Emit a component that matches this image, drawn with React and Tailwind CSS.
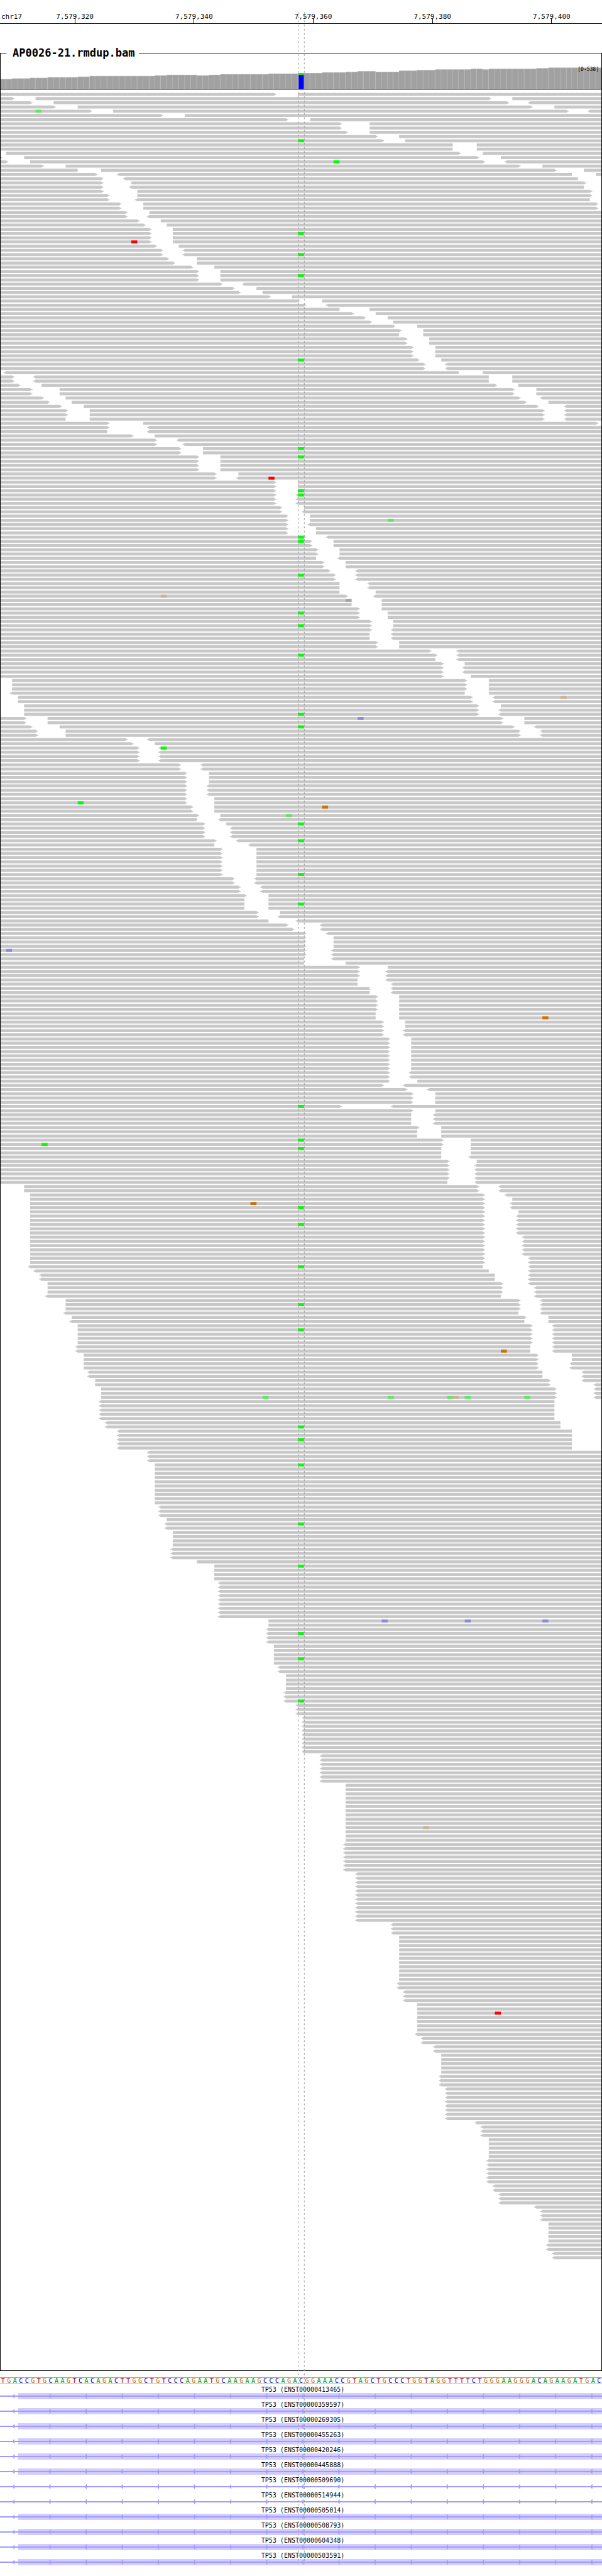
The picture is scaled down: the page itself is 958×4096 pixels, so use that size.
import React from "react";

const BASES = 101;
const BASE_WIDTH = 9.9;
const ROW_PITCH = 7;
const FIRST_ROW_Y = 154;

const TICKS = [
  { label: "7,579,320", base: 12.5 },
  { label: "7,579,340", base: 32.5 },
  { label: "7,579,360", base: 52.5 },
  { label: "7,579,380", base: 72.5 },
  { label: "7,579,400", base: 92.5 },
];

// First base of each step and the y of its bar top.
const COVERAGE = [
  [0, 131], [2, 130], [5, 129], [8, 128], [13, 127], [15, 126], [26, 125], [28, 124],
  [33, 125], [35, 124], [37, 123], [45, 122], [50, 121], [54, 120], [58, 119], [60, 118],
  [63, 119], [67, 117], [70, 116], [73, 115], [79, 114], [81, 115], [82, 114], [90, 113],
  [92, 112],
];

// [number of rows, layout]. A layout starts at base 0, or at ":n"; then ends and
// starts alternate. ">" and "<" mark a strand tip on that side.
const READS = [
  [1, "46> 50"], [1, "2> 6 82> 86"], [1, "5> 9 85> <89"], [1, "9> 13 89> 93"],
  [1, "15> 19 95> <99"], [1, "27> 31"], [1, "48> 52"], [2, "57> 62"], [1, "58> 62"],
  [1, "63> 67"], [1, "64> 68"], [2, "76 80"], [1, ":1 77> 81"], [1, "0> 4 80> 84"],
  [1, "1> 5 81> <85"], [1, "7> 11 87> 91"], [1, "13 17 93> 98"], [1, "16> <20 96 100"],
  [1, "17> <21 97"], [1, "17> 22 98>"], [1, "17> <22 98"], [1, "17> 23 99>"],
  [1, "18> 23 99>"], [1, "18> <23 99"], [2, "20> 24 100>"], [1, "21> 25"], [1, "21> <25"],
  [1, "23> 27"], [1, "24> 28"], [4, "25> 29"], [1, "26> 30"], [2, "27> <31"],
  [1, "28> 33"], [1, "29> 33"], [1, "32> 36"], [3, "33> 37"], [1, "37> <41"],
  [1, "39> 43"], [1, "40> 44"], [1, "45> 49"], [1, "50> 54"], [1, "51> <55"],
  [1, "57 62"], [1, "59> 63"], [1, "61> 65"], [1, "62> 66"], [1, "66> 70"],
  [1, "67> 71"], [1, "67 71"], [2, "68> 72"], [3, "69> 73"], [1, "70> 74"],
  [2, "71> <75"], [1, ":<1 77 81"], [2, "2> <6 82 86"], [1, "3> 7 83> 87"],
  [2, "5> 10 86> 90"], [1, "7> 11 87> <91"], [1, "8> 12 88> 92"], [1, "10> 14 90> <95"],
  [2, "11> 15 91> <95"], [1, "11 15 91> <95"], [1, "18> 24 100>"], [1, "18> <25"],
  [1, "18 <25"], [1, "22> 26"], [1, "26> <30"], [1, "26> <31"], [2, "30> 34"],
  [4, "33> 37"], [1, "36> 40"], [1, "36> <40"], [3, "46> 50"], [3, "46> <50"],
  [1, "47> 51"], [1, "47> <51"], [2, "48> 52"], [1, "48> <52"], [2, "48> 53"],
  [1, "51> <55"], [2, "52> 56"], [2, "53> 57"], [1, "53 <57"], [2, "54> 58"],
  [1, "55> <60"], [2, "56> <60"], [2, "57 <62"], [1, "57 63"], [1, "58> <63"],
  [2, "59 64"], [1, "60> 64"], [2, "60> 65"], [2, "62> 66"], [1, "62> <66"],
  [2, "62 <66"], [2, "63> 67"], [1, "72> <77"], [1, "73> <77"], [1, "73 <77"],
  [1, "74> 78"], [2, "74> <78"], [1, "74> 79"], [3, ":2 78> 82"], [1, ":<2 78 82"],
  [2, ":3 79> <83"], [1, ":4 80> 84"], [2, ":4 80> <84"], [2, "4> 8 84> 88"],
  [1, "5> 10 86> <90"], [2, "6> 11 87> <91"], [1, "21> <25"], [1, "22> 26"],
  [4, "23> <27"], [2, "30> <34"], [3, "31> 35"], [3, "31> <35"], [2, "31> 36"],
  [2, "32> 36"], [1, "33> 37"], [1, "33 <37"], [1, "34> 38"], [3, "34> <39"],
  [1, "36> <40"], [1, "36 <42"], [7, "37> 43"], [2, "39> <43"], [2, "40> <44"],
  [1, "41> 45"], [3, "41 45"], [1, "43> 47"], [1, "43> <47"], [1, "45 <50"],
  [1, "48> <54"], [1, "49> <54"], [1, "51> <55"], [3, "51> 56"], [2, "51> <56"],
  [1, "51 <56"], [1, "51 58"], [1, "60> 65"], [2, "60> <65"], [1, "60 <65"],
  [1, "60 <66"], [2, "62 <66"], [4, "63> 67"], [2, "63 67"], [2, "64> 68"],
  [2, "64> <68"], [8, "65> 69"], [2, "65> <69"], [1, "65> 70"], [1, "64> <68"],
  [1, "68> <72"], [3, "69> 73"], [1, "57> <66"], [1, "69> 73"], [3, "69 <73"],
  [1, "70> 74"], [2, "70 74"], [2, "74> 79"], [2, "74 79"], [1, "74 <79"],
  [1, "75> 80"], [4, "75> <80"], [1, "75 <80"], [2, ":4 80> <84"], [1, ":5 81> <85"],
  [1, ":5 81> 86"], [2, ":5 81> <86"], [1, ":5 81> 87"], [5, ":5 81> <87"],
  [5, ":5 81> <88"], [2, ":5 81> <89"], [1, ":<5 81 <89"], [1, ":<6 82 <89"],
  [2, ":<7 83 <89"], [1, ":8 84> <89"], [2, ":8 84> <90"], [1, ":<8 84 <90"],
  [3, ":11 87> <91"], [1, ":<11 87 <91"], [1, ":12 88> 92"], [1, ":<12 88 92"],
  [5, ":13 89> <93"], [2, ":<13 89 <93"], [2, ":14 90> 96"], [2, ":14 90> <96"],
  [2, ":<15 91 <98"], [1, ":16 92> <98"], [1, ":16 92> <100"], [3, ":17 93> <100"],
  [5, ":<17 93"], [2, ":<18 94"], [5, ":<20 96"], [3, ":<25"], [10, ":26"],
  [3, ":<27"], [1, ":28"], [2, ":<28"], [4, ":29"], [3, ":<29"], [1, ":33"],
  [4, ":36"], [9, ":<37"], [2, ":45"], [4, ":<45"], [5, ":46"], [2, ":<47"],
  [4, ":48"], [3, ":<48"], [3, ":<50"], [9, ":<51"], [7, ":<54"], [14, ":58"],
  [7, ":<58"], [12, ":<60"], [3, ":<66"], [11, ":67"], [2, ":<67"], [3, ":<68"],
  [7, ":70"], [1, ":<70"], [2, ":<71"], [2, ":<73"], [5, ":74"], [3, ":<74"],
  [8, ":<75"], [1, ":<80"], [3, ":<81"], [5, ":82"], [6, ":<82"], [2, ":<83"],
  [3, ":<84"], [1, ":<90"], [3, ":<91"], [5, ":92"], [2, ":<92"], [2, ":<93"],
];

// Rows whose read carries the variant base under the cursor.
const VARIANT_ROWS = [
  11, 33, 38, 43, 63, 84, 86, 94, 95, 105, 106, 114, 123, 126, 133, 147, 150, 173, 177,
  185, 192, 240, 248, 250, 264, 268, 278, 287, 293, 316, 319, 325, 339, 349, 365, 371, 381,
];

const GREEN = "#00ff00";
const PALE_GREEN = "#64e664";
const RED = "#ff0000";
const ORANGE = "#d17105";
const TAN = "#c8b49c";
const LAVENDER = "#8c8cdc";

// [row, base, colour]
const MISMATCHES = [
  [4, 6, PALE_GREEN], [16, 56, GREEN], [35, 22, RED], [91, 45, RED], [101, 65, PALE_GREEN],
  [119, 27, TAN], [120, 58, "#a8a8a8"], [143, 94, TAN], [148, 60, LAVENDER], [155, 27, GREEN],
  [168, 13, GREEN], [169, 54, ORANGE], [171, 48, PALE_GREEN], [203, 1, LAVENDER],
  [219, 91, ORANGE], [249, 7, GREEN], [263, 42, ORANGE], [298, 84, ORANGE],
  [309, 44, PALE_GREEN], [309, 65, PALE_GREEN], [309, 75, PALE_GREEN], [309, 76, TAN],
  [309, 78, PALE_GREEN], [309, 88, PALE_GREEN], [362, 64, LAVENDER], [362, 78, LAVENDER],
  [362, 91, LAVENDER], [411, 71, TAN], [455, 83, RED],
  ...VARIANT_ROWS.map((row) => [row, 50, GREEN]),
];

const SEQUENCE =
  "TGACCGTGCAAGTCACAGACTTGGCTGTCCCAGAATGCAAGAAGCCCAGA" +
  "CGGAAACCGTAGCTGCCCTGGTAGGTTTTCTGGGAAGGGACAGAAGATGAC";

const LETTER_COLORS = {
  A: "text-[#009a00]",
  C: "text-[#00008c]",
  G: "text-[#b06a14]",
  T: "text-[#b40000]",
};

const TRANSCRIPTS = [
  { id: "ENST00000413465", exon: true },
  { id: "ENST00000359597", exon: true },
  { id: "ENST00000269305", exon: true },
  { id: "ENST00000455263", exon: true },
  { id: "ENST00000420246", exon: true },
  { id: "ENST00000445888", exon: true },
  { id: "ENST00000509690", exon: false },
  { id: "ENST00000514944", exon: false },
  { id: "ENST00000505014", exon: true },
  { id: "ENST00000508793", exon: true },
  { id: "ENST00000604348", exon: true },
  { id: "ENST00000503591", exon: true },
];

const ARROWS = Array.from({ length: 17 }, (_, i) => 21 + i * 60);

function xOf(base) {
  return Math.round(base * BASE_WIDTH);
}

function spanPath(from, to, y) {
  const x1 = xOf(parseInt(from.replace("<", ""), 10));
  const x2 = xOf(parseInt(to, 10));
  let d = `M${x1} ${y}H${x2}`;
  if (to.endsWith(">")) d += `l2 1.5l2 0.5v1l-2 0.5L${x2} ${y + 5}`;
  else d += "v5";
  d += `H${x1}`;
  if (from.startsWith("<")) d += "l-2 -1.5l-2 -0.5v-1l2 -0.5";
  return d + "Z";
}

function rowPath(layout, y) {
  const tokens = layout.split(" ");
  let from = tokens[0].startsWith(":") ? tokens.shift().slice(1) : "0";
  let d = "";
  while (from !== undefined) {
    d += spanPath(from, tokens.shift() ?? String(BASES), y);
    from = tokens.shift();
  }
  return d;
}

function readsPath() {
  let row = 0;
  let d = "";
  for (const [count, layout] of READS) {
    for (let i = 0; i < count; i++) {
      d += rowPath(layout, FIRST_ROW_Y + row * ROW_PITCH);
      row += 1;
    }
  }
  return d;
}

function coverageTops() {
  const tops = [];
  COVERAGE.forEach(([start, top], i) => {
    const end = i + 1 < COVERAGE.length ? COVERAGE[i + 1][0] : BASES;
    for (let b = start; b < end; b++) tops.push(top);
  });
  return tops;
}

function Ruler() {
  return (
    <header className="relative flex h-[38px] items-end border-b border-black pb-1 pl-0.5 text-[11px] leading-[12px]">
      <span>chr17</span>
      {TICKS.map(({ label, base }) => (
        <div
          key={label}
          className="absolute bottom-0 flex h-4 w-px justify-center"
          style={{ left: `${(base / BASES) * 100}%` }}
        >
          <span className="absolute bottom-1 whitespace-nowrap">{label}</span>
          <span className="h-[7px] w-px self-end bg-black" />
        </div>
      ))}
    </header>
  );
}

function Alignments() {
  return (
    <svg viewBox="1 98 998 3836" className="block h-auto w-full" role="img" aria-label="Coverage and aligned reads">
      {coverageTops().map((top, b) => {
        const x = xOf(b);
        const w = xOf(b + 1) - x;
        if (b === 50) {
          return (
            <g key={b}>
              <rect x={x} y={top} width={w} height={148 - top} fill="#b0b0b0" />
              <rect x={x + 1} y={121} width={w - 1} height={3} fill={GREEN} />
              <rect x={x + 1} y={124} width={w - 1} height={24} fill="#0000ff" />
            </g>
          );
        }
        return (
          <g key={b}>
            <rect x={x} y={top} width={w} height={148 - top} fill="#b0b0b0" />
            <rect x={x} y={top + 1} width={w - 1} height={147 - top} fill="#a1a1a1" />
          </g>
        );
      })}
      <rect x={0} y={148} width={1000} height={1} fill="#757575" />
      <path d={readsPath()} fill="#c8c8c8" />
      {MISMATCHES.map(([row, base, color]) => (
        <rect
          key={`${row}-${base}`}
          x={xOf(base)}
          y={FIRST_ROW_Y + row * ROW_PITCH}
          width={10}
          height={5}
          fill={color}
        />
      ))}
    </svg>
  );
}

function Sequence() {
  return (
    <div className="mt-2.5 grid h-[11px] grid-cols-[repeat(101,minmax(0,1fr))] border-y border-[#a0a0a0] text-center text-[10px] leading-[9px]">
      {SEQUENCE.split("").map((letter, i) => (
        <span key={i} className={LETTER_COLORS[letter]}>
          {letter}
        </span>
      ))}
    </div>
  );
}

function Transcript({ id, exon }) {
  return (
    <li className="flex flex-col">
      <p className="pt-[3px] pl-1.5 text-center text-[10px] leading-[11px]">TP53 ({id})</p>
      <svg viewBox="0 0 1000 10" preserveAspectRatio="none" className="h-2.5 w-full" aria-hidden="true">
        {exon && <rect x={30} y={0} width={970} height={10} fill="#d2ccff" />}
        <rect x={0} y={4} width={1000} height={2} fill="#9f9bff" />
        <path d={ARROWS.map((x) => `M${x} 4.5L${x + 2} 2V1h1v8h-1V8L${x} 5.5Z`).join("")} fill="#9f9bff" />
      </svg>
    </li>
  );
}

function Cursor() {
  return (
    <svg
      viewBox="0 0 1000 4236"
      preserveAspectRatio="none"
      className="pointer-events-none absolute inset-x-0 top-[19px] h-[calc(100%-38px)] w-full"
      aria-hidden="true"
    >
      <path d="M495.5 0V4236M505.5 0V4236" stroke="#969696" strokeWidth={1} strokeDasharray="3 4" />
    </svg>
  );
}

export default function App() {
  return (
    <main className="relative flex w-full flex-col overflow-hidden bg-white pb-[17px] font-['DejaVu_Sans_Mono',monospace] text-black">
      <Ruler />
      <fieldset className="relative mt-9 min-w-0 border border-black">
        <legend className="ml-[9px] px-2.5">
          <h1 className="w-[191px] text-[17px] leading-[20px] font-bold whitespace-nowrap">AP0026-21.rmdup.bam</h1>
        </legend>
        <Alignments />
        <span className="absolute top-3 right-1 text-[8px] leading-[10px]">[0-538]</span>
      </fieldset>
      <Sequence />
      <ul className="flex flex-col">
        {TRANSCRIPTS.map((transcript) => (
          <Transcript key={transcript.id} {...transcript} />
        ))}
      </ul>
      <Cursor />
    </main>
  );
}
